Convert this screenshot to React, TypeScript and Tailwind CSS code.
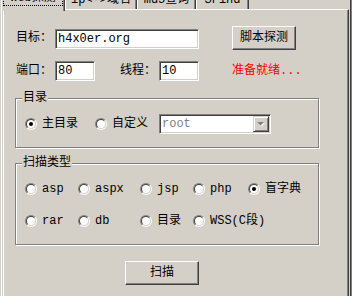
import React from 'react';

const sunken =
  'border border-t-[#808080] border-l-[#808080] border-r-white border-b-white shadow-[inset_1px_1px_0_#404040,inset_-1px_-1px_0_#d4d0c8]';
const raised =
  'border border-t-white border-l-white border-r-[#404040] border-b-[#404040] shadow-[inset_-1px_-1px_0_#808080]';

function Radio({ checked }: { checked?: boolean }) {
  return (
    <span className="flex h-[12px] w-[12px] shrink-0 rounded-full border border-t-[#808080] border-l-[#808080] border-r-white border-b-white">
      <span className="flex flex-1 items-center justify-center rounded-full border border-t-[#404040] border-l-[#404040] border-r-[#d4d0c8] border-b-[#d4d0c8] bg-white">
        {checked && <span className="h-[4px] w-[4px] rounded-full bg-black" />}
      </span>
    </span>
  );
}

function Option({ label, checked, w }: { label: string; checked?: boolean; w: string }) {
  return (
    <div className={`flex items-center gap-[5px] ${w}`}>
      <Radio checked={checked} />
      <span className="whitespace-nowrap">{label}</span>
    </div>
  );
}

function Group({ title, className, children }: { title: string; className: string; children: React.ReactNode }) {
  return (
    <div className={`relative w-[304px] border border-[#808080] shadow-[inset_1px_1px_0_#fff,1px_1px_0_#fff] ${className}`}>
      <span className="absolute left-[6px] top-[-8px] bg-[#d4d0c8] px-px leading-[14px]">{title}</span>
      {children}
    </div>
  );
}

function Tab({ label, w }: { label: string; w: string }) {
  return (
    <div className={`mt-[2px] h-[18px] border-l border-t border-white border-r-[#404040] border-r shadow-[inset_-1px_0_0_#808080] pt-[1px] text-center leading-[14px] whitespace-nowrap ${w}`}>
      {label}
    </div>
  );
}

export default function App() {
  return (
    <div className="h-[296px] w-[352px] overflow-hidden bg-[#d4d0c8] pl-px border-r border-[#808080] font-['Liberation_Mono','Noto_Sans_CJK_SC',monospace] text-[12px] text-black">
      <div className="flex h-full flex-col border-l border-white border-r border-r-[#404040] pl-px pr-px">
        <div className="-mt-[11px] -ml-[2px] flex h-[20px] items-start">
          <div className="relative z-10 h-[22px] w-[64px] border-l border-t border-white border-r border-r-[#404040] bg-[#d4d0c8] shadow-[inset_-1px_0_0_#808080]">
            <span className="mx-px mt-px block border border-dotted border-black text-center leading-[13px]">Web探测</span>
          </div>
          <Tab label="ip<->域名" w="w-[72px]" />
          <Tab label="md5查询" w="w-[59px]" />
          <Tab label="SFind" w="w-[53px]" />
        </div>

        <div className="flex flex-1 flex-col border-l border-t border-white border-r border-r-[#404040] pl-[11px] shadow-[inset_-1px_0_0_#808080]">
          <div className="mt-[16px] flex h-[24px] items-center">
            <span className="w-[40px] pl-px">目标：</span>
            <input
              readOnly
              defaultValue="h4x0er.org"
              className={`${sunken} mt-[2px] h-[20px] w-[144px] bg-white pl-[2px] text-[12px] outline-none`}
            />
            <button className={`${raised} ml-[33px] h-[24px] w-[64px] bg-[#d4d0c8] text-[12px]`}>脚本探测</button>
          </div>

          <div className="mt-[11px] flex h-[20px] items-center">
            <span className="w-[40px] pl-px">端口：</span>
            <input readOnly defaultValue="80" className={`${sunken} h-[20px] w-[40px] bg-white pl-[2px] text-[12px] outline-none`} />
            <span className="ml-[24px] w-[40px] pl-px">线程：</span>
            <input readOnly defaultValue="10" className={`${sunken} h-[20px] w-[40px] bg-white pl-[2px] text-[12px] outline-none`} />
            <span className="ml-[33px] text-[#ff0000]">准备就绪...</span>
          </div>

          <Group title="目录" className="mt-[17px] flex h-[50px] items-center pl-[9px] pt-[2px]">
            <Option label="主目录" checked w="w-[70px]" />
            <Option label="自定义" w="w-[64px]" />
            <div className={`${sunken} flex h-[20px] w-[112px] items-center bg-white`}>
              <span className="flex-1 pl-[2px] text-[#808080]">root</span>
              <span className="mr-px flex h-[16px] w-[16px] items-center justify-center border border-t-[#d4d0c8] border-l-[#d4d0c8] border-r-[#404040] border-b-[#404040] bg-[#d4d0c8] shadow-[inset_1px_1px_0_#fff,inset_-1px_-1px_0_#808080]">
                <svg width="8" height="5" viewBox="0 0 8 5">
                  <path d="M1 1h7L4.5 4.5z" fill="#fff" />
                  <path d="M0 0h7L3.5 3.5z" fill="#808080" />
                </svg>
              </span>
            </div>
          </Group>

          <Group title="扫描类型" className="mt-[15px] flex h-[82px] flex-col gap-[18px] pl-[9px] pt-[18px]">
            <div className="flex h-[14px]">
              <Option label="asp" w="w-[53px]" />
              <Option label="aspx" w="w-[62px]" />
              <Option label="jsp" w="w-[53px]" />
              <Option label="php" w="w-[55px]" />
              <Option label="盲字典" checked w="w-[60px]" />
            </div>
            <div className="flex h-[14px]">
              <Option label="rar" w="w-[53px]" />
              <Option label="db" w="w-[62px]" />
              <Option label="目录" w="w-[53px]" />
              <Option label="WSS(C段)" w="w-[80px]" />
            </div>
          </Group>

          <button className={`${raised} ml-[110px] mt-[16px] h-[24px] w-[74px] bg-[#d4d0c8] text-[12px]`}>扫描</button>
        </div>
      </div>
    </div>
  );
}
